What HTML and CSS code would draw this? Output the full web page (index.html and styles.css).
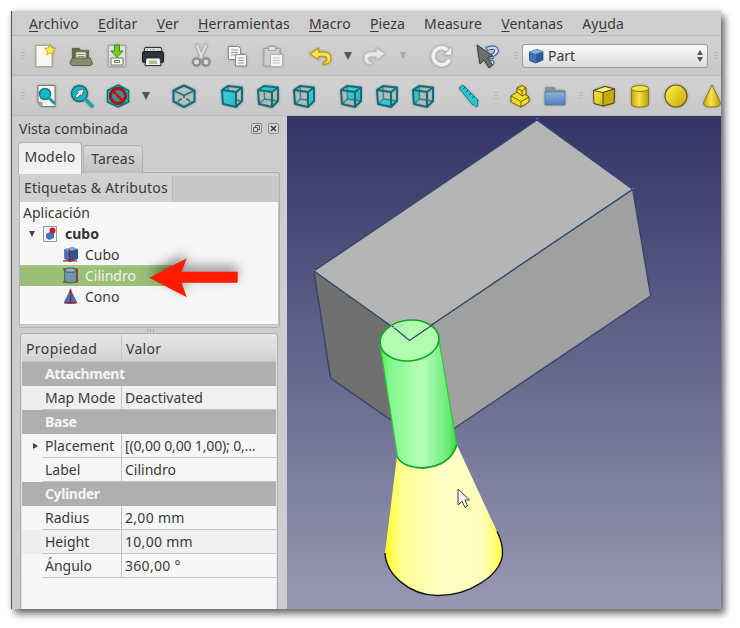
FILE: index.html
```html
<!DOCTYPE html>
<html lang="es">
<head>
<meta charset="utf-8">
<title>FreeCAD</title>
<link rel="stylesheet" href="styles.css">
</head>
<body>
<svg class="defs" aria-hidden="true">
  <defs>
    <linearGradient id="gTeal" x1="0" y1="0" x2="1" y2="1"><stop offset="0" stop-color="#14e0e6"/><stop offset="1" stop-color="#12aab4"/></linearGradient>
    <linearGradient id="gYel" x1="0" y1="0" x2="1" y2="1"><stop offset="0" stop-color="#fff04a"/><stop offset="1" stop-color="#c9a800"/></linearGradient>
    <linearGradient id="gYelH" x1="0" y1="0" x2="1" y2="0"><stop offset="0" stop-color="#c9a60c"/><stop offset=".45" stop-color="#f7e34a"/><stop offset="1" stop-color="#b99a08"/></linearGradient>
    <linearGradient id="gBlue" x1="0" y1="0" x2="0" y2="1"><stop offset="0" stop-color="#8fb4e0"/><stop offset="1" stop-color="#4f7fbf"/></linearGradient>
    <linearGradient id="gCylHi" x1="0" y1="0" x2="1" y2="0"><stop offset="0" stop-color="#46ef52"/><stop offset=".12" stop-color="#80f88a"/><stop offset=".55" stop-color="#b8feba"/><stop offset=".9" stop-color="#66ea70"/><stop offset="1" stop-color="#38d846"/></linearGradient>
    <linearGradient id="gCone" x1="0" y1="0" x2="1" y2="0"><stop offset="0" stop-color="#ffff20"/><stop offset=".14" stop-color="#ffff90"/><stop offset=".5" stop-color="#ffffc8"/><stop offset=".84" stop-color="#ffffb8"/><stop offset="1" stop-color="#ffff40"/></linearGradient>
    <symbol id="wire" viewBox="0 0 24 24">
      <path d="M8 2 22 3.500 22 17 16 23 3 20 2 6Z" fill="#9cc4c6" fill-opacity=".25"/>
      <path d="M2 6 8 2 22 3.500 16 8 2 6ZM2 6 3 20 16 23 16 8M16 23 22 17 22 3.500" fill="none" stroke="#0f6f78" stroke-width="2" stroke-linejoin="round"/>
    </symbol>
    <symbol id="wireBack" viewBox="0 0 24 24">
      <path d="M8 2 8.500 15 3 20M8.500 15 22 17" fill="none" stroke="#0f6f78" stroke-width="1.300"/>
    </symbol>
  </defs>
</svg>

<div class="window">
  <nav class="menubar">
    <span class="menu"><u>A</u>rchivo</span>
    <span class="menu"><u>E</u>ditar</span>
    <span class="menu"><u>V</u>er</span>
    <span class="menu"><u>H</u>erramientas</span>
    <span class="menu"><u>M</u>acro</span>
    <span class="menu"><u>P</u>ieza</span>
    <span class="menu">Measure</span>
    <span class="menu"><u>V</u>entanas</span>
    <span class="menu">Ay<u>u</u>da</span>
  </nav>

  <div class="toolbar">
    <span class="handle h-first"></span>
    <span class="tool"><svg viewBox="0 0 24 24"><path d="M3 1.500H15L19 6V22.500H3Z" fill="#fbf8ee" stroke="#a8a8a0"/><path d="m17 0.500 1.700 3.400 3.800.5-2.800 2.600.7 3.700-3.400-1.800-3.300 1.800.6-3.700-2.700-2.600 3.800-.5Z" fill="#fce94f" stroke="#c4a000" stroke-width=".8"/></svg></span>
    <span class="tool"><svg viewBox="0 0 24 24"><path d="M3 4H10L12 6H20V19H3Z" fill="#5f6b4b"/><path d="M7 8H17V15H7Z" fill="#e6e6dc" stroke="#8a8a80" stroke-width=".8"/><path d="M8.500 10.500H15.500M8.500 12.500H15.500" stroke="#8a8a80"/><path d="M3.500 14H21L23.500 20 21 21.500H3L1 19Z" fill="#838f6c" stroke="#58634a"/></svg></span>
    <span class="tool"><svg viewBox="0 0 24 24"><path d="M3.500 1.500H20.500V22.500H3.500Z" fill="#dedfd9" stroke="#a4a6a0"/><path d="M6 14H18V21H6Z" fill="#f6f6f0" stroke="#77786f"/><path d="M9.500 16.500H14.500V18.500H9.500Z" fill="#fff" stroke="#555" stroke-width=".8"/><path d="M9.500 1H14.500V7H18L12 13.500 6 7H9.500Z" fill="#72cc2a" stroke="#3f8e10"/></svg></span>
    <span class="tool"><svg viewBox="0 0 24 24"><path d="M4 3.500H20L21 8H3Z" fill="#d8d8d4" stroke="#2e2e2e"/><path d="M1.500 9.500Q1.500 7.500 3.500 7.500H20.500Q22.500 7.500 22.500 9.500V17Q22.500 18.500 20.500 18.500H3.500Q1.500 18.500 1.500 17Z" fill="#30343a" stroke="#1a1a1a"/><path d="M5 14H19L20 21.500H4Z" fill="#f2f2ee" stroke="#333"/><path d="M8 16.500H16V20H8Z" fill="#9cc98a"/><path d="M6 5.500H7M9 5.500H10M12 5.500H13" stroke="#777"/></svg></span>
    <span class="sep s12"></span>
    <span class="tool"><svg viewBox="0 0 24 24"><path d="M8 1 12.700 13.500M17 1 11.300 13.500" stroke="#bdbdbd" stroke-width="3.200" stroke-linecap="round" fill="none"/><path d="M8 1 12.700 13.500M17 1 11.300 13.500" stroke="#ededed" stroke-width="1.200" fill="none"/><circle cx="7.500" cy="18" r="3.500" fill="#dcdcdc" stroke="#8b8b8b" stroke-width="2"/><circle cx="17" cy="18" r="3.500" fill="#dcdcdc" stroke="#8b8b8b" stroke-width="2"/></svg></span>
    <span class="tool"><svg viewBox="0 0 24 24"><path d="M3.500 2.500H13.500L15.500 4.500V15.500H3.500Z" fill="#f4f4f2" stroke="#8c8c8a"/><path d="M6 6H13M6 8.500H13M6 11H13" stroke="#9c9c9a"/><path d="M10.500 10.500H20.500L21.500 11.500V22H10.500Z" fill="#f4f4f2" stroke="#8c8c8a"/><path d="M13 14H19M13 16.500H19M13 19H19" stroke="#9c9c9a"/></svg></span>
    <span class="tool"><svg viewBox="0 0 24 24"><path d="M3 4.500H19V22H3Z" fill="#cfcfca" stroke="#a2a2a0"/><path d="M7.500 2.500H14.500V6.500H7.500Z" fill="#e2e2de" stroke="#a2a2a0"/><path d="M9.500 10.500H21.500V22.500H9.500Z" fill="#f5f5f2" stroke="#b0b0ae"/><path d="M12 14H19M12 16.500H19M12 19H19" stroke="#c2c2c0"/></svg></span>
    <span class="sep s11"></span>
    <span class="tool"><svg viewBox="0 0 24 24"><path d="M10.500 4 2 10 10.500 15.500V12.500H16Q19 12.500 19 15 19 17.500 15.500 18.500L14.500 20.500Q23 20.500 23 14.500 23 8 16 8H10.500Z" fill="#f9e26a" stroke="#c4a000" stroke-width="1.300" stroke-linejoin="round"/></svg></span>
    <span class="drop"><i class="tri"></i></span>
    <span class="tool"><svg viewBox="0 0 24 24"><path d="M13.500 4 22 10 13.500 15.500V12.500H8Q5 12.500 5 15 5 17.500 8.500 18.500L9.500 20.500Q1 20.500 1 14.500 1 8 8 8H13.500Z" fill="#e8e8e6" stroke="#c6c6c4" stroke-linejoin="round"/></svg></span>
    <span class="drop"><i class="tri tri-off"></i></span>
    <span class="sep s12"></span>
    <span class="tool"><svg viewBox="0 0 24 24"><path d="M19.500 15.500A8.500 8.500 0 1 1 17.500 6" fill="none" stroke="#bdbdbb" stroke-width="5"/><path d="M19.500 15.500A8.500 8.500 0 1 1 17.500 6" fill="none" stroke="#f0f0ee" stroke-width="3.400"/><path d="M21.500 3V11H13.500Z" fill="#f0f0ee" stroke="#bdbdbb"/></svg></span>
    <span class="sep s10"></span>
    <span class="tool"><svg viewBox="0 0 24 24"><text x="10" y="21" class="help-mark">?</text><path d="M1 1 17 12 11.500 13.500 16.500 21 13 24 8 16 4 20Z" fill="#6e6e6c" stroke="#3a3a3a" stroke-linejoin="round"/></svg></span>
    <span class="handle h-mid"></span>
    <div class="combo">
      <svg class="combo-icon" viewBox="0 0 16 16"><path d="M1.500 4 9 1.500 15 3.500 15 12 7.500 15 1.500 12.500Z" fill="#3f72b8" stroke="#24487c" stroke-width=".8"/><path d="M1.500 4 9 1.500 15 3.500 8 6Z" fill="#8ab0e2"/><path d="M8 6 15 3.500V12L8 15Z" fill="#2c5a9a"/></svg>
      <span class="combo-text">Part</span>
      <span class="spin"><i class="up"></i><i class="down"></i></span>
    </div>
    <span class="handle h-end"></span>
  </div>

  <div class="toolbar toolbar-2">
    <span class="handle h-first2"></span>
    <span class="tool"><svg viewBox="0 0 24 24"><path d="M4 1.500H21V22.500H8L4 18.500Z" fill="#f6f6f0" stroke="#77786f"/><path d="M4 18.500H8V22.500Z" fill="#bcbcb4" stroke="#77786f" stroke-width=".7"/><circle cx="11" cy="10" r="5.500" fill="#1ab8c2" stroke="#0f7a84" stroke-width="1.500"/><path d="M15 14 20 19" stroke="#0f9aa6" stroke-width="3" stroke-linecap="round"/></svg></span>
    <span class="tool"><svg viewBox="0 0 24 24"><circle cx="9.500" cy="9.500" r="8" fill="#1ab0ba" stroke="#0f7079" stroke-width="1.500"/><path d="M15.500 15.500 22 22" stroke="#13a4ae" stroke-width="3.600" stroke-linecap="round"/><path d="M14 5 7 7 8.500 8.500 5 12 7 14 10.500 10.500 12 12Z" fill="#eef2f2" stroke="#3c5e60" stroke-width=".7"/></svg></span>
    <span class="tool"><svg viewBox="0 0 24 24"><path d="M12 1 22.500 6.500V18L12 23 1.500 18V6.500Z" fill="#1ac0ca" stroke="#0f6f78" stroke-width="1.500"/><circle cx="12" cy="12" r="7.300" fill="#3c8c96" stroke="#d40000" stroke-width="2.400"/><path d="M7 7 17 17" stroke="#d40000" stroke-width="2.400"/><circle cx="12" cy="12" r="8.700" fill="none" stroke="#222" stroke-width=".7"/></svg></span>
    <span class="drop"><i class="tri"></i></span>
    <span class="sep s11"></span>
    <span class="tool"><svg viewBox="0 0 24 24"><path d="M12 1.500 22.500 6.500V17.500L12 23 1.500 17.500V6.500Z" fill="#b8cccd" fill-opacity=".35" stroke="#0f6f78" stroke-width="2" stroke-linejoin="round"/><path d="M1.500 6.500 12 11.500 22.500 6.500M12 11.500V14M12 1.500 5 5M12 1.500 19 5" fill="none" stroke="#0f6f78" stroke-width="1.400"/><path d="M6 18Q7 15 10 15M18 18Q17 15 14 15" fill="none" stroke="#0f6f78" stroke-width="1.200"/></svg></span>
    <span class="sep s12"></span>
    <span class="tool"><svg viewBox="0 0 24 24"><use href="#wireBack"/><path d="M2 6 16 8.500 15.500 23 3 20Z" fill="url(#gTeal)"/><use href="#wire"/></svg></span>
    <span class="tool"><svg viewBox="0 0 24 24"><use href="#wireBack"/><path d="M2 6 8 2 22 3.500 16 8Z" fill="url(#gTeal)"/><use href="#wire"/></svg></span>
    <span class="tool"><svg viewBox="0 0 24 24"><use href="#wireBack"/><path d="M16 8 22 3.500 22 17 16 23Z" fill="url(#gTeal)"/><use href="#wire"/></svg></span>
    <span class="sep s11"></span>
    <span class="tool"><svg viewBox="0 0 24 24"><path d="M8 2 22 3.500 22 17 8.500 15Z" fill="url(#gTeal)"/><use href="#wireBack"/><use href="#wire"/></svg></span>
    <span class="tool"><svg viewBox="0 0 24 24"><path d="M3 20 8.500 15 22 17 16 23Z" fill="url(#gTeal)"/><use href="#wireBack"/><use href="#wire"/></svg></span>
    <span class="tool"><svg viewBox="0 0 24 24"><path d="M2 6 8 2 8.500 15 3 20Z" fill="url(#gTeal)"/><use href="#wireBack"/><use href="#wire"/></svg></span>
    <span class="sep s9"></span>
    <span class="tool"><svg viewBox="0 0 24 24"><path d="M3 4 7 1 22 16 21 23 16 20Z" fill="#2fc6d0" stroke="#0f7f88"/><path d="M7 5 9 3.500M10 8 12 6.500M13 11 15 9.500M16 14 18 12.500" stroke="#0f7f88" stroke-width="1.200"/></svg></span>
    <span class="handle h-mid2"></span>
    <span class="tool"><svg viewBox="0 0 24 24"><path d="M4 12 10 8V4L15 1.500 19 4V11L22 13V18L14 23 4 18Z" fill="#f2dc28" stroke="#6e6000" stroke-linejoin="round"/><path d="M4 12 14 17.500V23M14 17.500 22 13M10 4 15 7 19 4M15 7V12M10 8 15 12 19 10" fill="none" stroke="#6e6000"/></svg></span>
    <span class="tool"><svg viewBox="0 0 24 24"><path d="M2 3H11L13 6H22V21H2Z" fill="#8a8f98"/><path d="M2 8H22V21H2Z" fill="url(#gBlue)" stroke="#56779f" stroke-width=".8"/></svg></span>
    <span class="handle h-mid3"></span>
    <span class="tool"><svg viewBox="0 0 24 24"><path d="M1.500 6.500 13 2.500 22.500 5 22 19 11 22 2 19.500Z" fill="url(#gYel)" stroke="#4e4a1a" stroke-linejoin="round"/><path d="M1.500 6.500 13 2.500 22.500 5 11 8.500Z" fill="#fff36a" stroke="#4e4a1a" stroke-linejoin="round"/><path d="M11 8.500 22.500 5 22 19 11 22Z" fill="#c7aa12" stroke="#4e4a1a" stroke-linejoin="round"/></svg></span>
    <span class="tool"><svg viewBox="0 0 24 24"><path d="M3.500 5V20Q3.500 23 12 23T20.500 20V5Z" fill="url(#gYelH)" stroke="#85771a"/><ellipse cx="12" cy="4.500" rx="8.500" ry="3" fill="#f8e540" stroke="#85771a"/></svg></span>
    <span class="tool"><svg viewBox="0 0 24 24"><circle cx="12" cy="12" r="11" fill="url(#gYel)" stroke="#6e6230" stroke-width="1.200"/></svg></span>
    <span class="tool"><svg viewBox="0 0 24 24"><path d="M12 1 20.500 19Q20.500 23 12 23T3.500 19Z" fill="url(#gYelH)" stroke="#85771a" stroke-linejoin="round"/></svg></span>
  </div>

  <div class="workspace">
    <aside class="dock">
      <div class="dock-title">
        <span class="dock-name">Vista combinada</span>
        <svg class="dock-btn" viewBox="0 0 11 11"><rect x=".5" y=".5" width="10" height="10" rx="1.500" class="btn-frame"/><path d="M2.500 4.500H6.500V8.500H2.500ZM4.500 4.500V2.500H8.500V6.500H6.500" class="btn-line"/></svg>
        <svg class="dock-btn dock-btn-x" viewBox="0 0 11 11"><rect x=".5" y=".5" width="10" height="10" rx="1.500" class="btn-frame"/><path d="M3 3 8 8M8 3 3 8" class="btn-x"/></svg>
      </div>
      <div class="tabs">
        <span class="tab tab-on">Modelo</span>
        <span class="tab">Tareas</span>
      </div>
      <section class="pane">
        <div class="tree-head"><span class="tree-head-cell">Etiquetas &amp; Atributos</span></div>
        <div class="tree">
          <div class="tree-row tree-app">Aplicación</div>
          <div class="tree-row tree-doc">
            <i class="tree-arrow"></i>
            <svg class="doc-icon" viewBox="0 0 16 16"><rect x=".5" y=".5" width="13" height="15" fill="#f5f5f5" stroke="#9a9a9a"/><path d="M3 8 8 5.500 11 7V12L6.500 14 3 12Z" fill="#3f72b8"/><circle cx="9.500" cy="4.500" r="3" fill="#cc1a1a"/></svg>
            <b>cubo</b>
          </div>
          <div class="tree-row tree-child">
            <svg class="item-icon" viewBox="0 0 16 16"><path d="M2 3 10 1 15 3V12L7 15 2 12Z" fill="#3f72b8"/><path d="M2 3 10 1 15 3 7 5Z" fill="#7ea6dc"/><path d="M7 5 15 3V12L7 15Z" fill="#2c558f"/><path d="M7 3V14M1 14H14" stroke="#b01818" stroke-width="1.300"/></svg>
            Cubo
          </div>
          <div class="tree-row tree-child tree-selected">
            <svg class="item-icon" viewBox="0 0 16 16"><path d="M2.500 3V13Q2.500 15 8 15T13.500 13V3Z" fill="#6a9aa8" stroke="#44606e"/><ellipse cx="8" cy="3" rx="5.500" ry="2" fill="#8cb0ba" stroke="#44606e"/><path d="M1 2H4M12 2H15M1 14H4M12 14H15M14.500 2V14" stroke="#a83020"/></svg>
            Cilindro
          </div>
          <div class="tree-row tree-child">
            <svg class="item-icon" viewBox="0 0 16 16"><path d="M8 1 14 13Q14 15 8 15T2 13Z" fill="#3f72b8"/><path d="M8 1V14M2 14H14" stroke="#b01818" stroke-width="1.300"/></svg>
            Cono
          </div>
        </div>
      </section>
      <div class="splitter"><i></i></div>
      <section class="props">
        <div class="prop-list">
          <div class="prop-head"><span class="ph-name">Propiedad</span><span class="ph-val">Valor</span></div>
          <div class="group">Attachment</div>
          <div class="prop"><span class="pn">Map Mode</span><span class="pv">Deactivated</span></div>
          <div class="group">Base</div>
          <div class="prop prop-exp"><i class="exp"></i><span class="pn">Placement</span><span class="pv pv-long">[(0,00 0,00 1,00); 0,...</span></div>
          <div class="prop prop-plain"><span class="pn">Label</span><span class="pv">Cilindro</span></div>
          <div class="group">Cylinder</div>
          <div class="prop prop-plain"><span class="pn">Radius</span><span class="pv pv-num">2,00 mm</span></div>
          <div class="prop"><span class="pn">Height</span><span class="pv pv-num">10,00 mm</span></div>
          <div class="prop prop-plain"><span class="pn">Ángulo</span><span class="pv pv-num">360,00 °</span></div>
        </div>
      </section>
    </aside>
    <main class="view">
      <svg class="scene" viewBox="287 116 434 493">
        <polygon points="537,120 632.700,189.300 410,339.500 314,271" fill="#b5b5b5"/>
        <polygon points="632.700,189.300 650.700,296 428,446 410,339.500" fill="#a0a0a0"/>
        <polygon points="314,271 410,339.500 428,446 330.500,378" fill="#707070"/>
        <path d="M537 120 632.700 189.300 650.700 296 428 446 330.500 378 314 271ZM314 271 410 339.500 632.700 189.300" fill="none" stroke="#2c4a68" stroke-width="1.400"/>
        <path d="M536 118h2v1h-2ZM632 188h2v1h-2ZM313 270h2v1h-2ZM651 296h1v1h-1ZM330 378h1v1h-1ZM408 340h2v2h-2Z" fill="#a040ff"/>
        <path d="M385 553C386 575 410 595 437 595.500 470 596 500 575 502.500 555 503 545 500 537 497 531.500L456.500 444 397 456Z" fill="url(#gCone)"/>
        <path d="M385 553C386 575 410 595 437 595.500 470 596 500 575 502.500 555 503 545 500 537 497 531.500" fill="none" stroke="#1a1a1a" stroke-width="1.500"/>
        <path d="M380 344 397.500 457Q402 467 423 468 450 466 456.700 445L439 340Z" fill="url(#gCylHi)"/>
        <path d="M380 344 397.500 457M456.700 445 439 340" fill="none" stroke="#2ec63a" stroke-width="1.200"/>
        <path d="M397.500 457Q402 467 423 468 450 466 456.700 445" fill="none" stroke="#18a424" stroke-width="1.800"/>
        <ellipse cx="409.500" cy="340.500" rx="29.500" ry="20.300" transform="rotate(-6 409.500 340.500)" fill="#b0fdb2" stroke="#14a820" stroke-width="1.600"/>
        <path d="M392 326 409.500 340.500 433 324.500" fill="none" stroke="#2c4a68" stroke-width="1.200"/>
        <path d="M393 328 403 325M405 333 407 338" fill="none" stroke="#b8b8b8"/>
        <path d="M458 489V505L462 501 465 507.500 467.500 506 465 500H469.500Z" fill="#f4f4f4" stroke="#2a2a2a" stroke-width=".9"/>
      </svg>
    </main>
  </div>
</div>

<svg class="callout" viewBox="0 0 100 50" aria-hidden="true"><path d="M1.300 23.700 38.700 4.300 33.700 17.700H89.700V28.700H33.700L38.700 43.300Z" class="callout-arrow"/></svg>
</body>
</html>
```

FILE: styles.css
```css
* { box-sizing: border-box; }
html, body { margin: 0; padding: 0; width: 740px; height: 628px; overflow: hidden; background: #fff; }
body { font-family: "Noto Sans", sans-serif; font-size: 14px; color: #3a3a3a; position: relative; }
.defs { position: absolute; width: 0; height: 0; }

.window {
  margin: 11px 0 0 11px;
  width: 710px;
  height: 598px;
  display: flex;
  flex-direction: column;
  background: #cdcdcd;
  border-left: 1px solid #55555a;
  box-shadow: 4px 5px 7px rgba(0,0,0,.55), 0 0 5px rgba(0,0,0,.18);
  overflow: hidden;
}

.menubar { height: 25px; display: flex; align-items: center; background: #cecece; border-bottom: 1px solid #bcbcbc; padding-left: 17px; gap: 19.200px; flex: none; }
.menu { line-height: 25px; letter-spacing: .12px; }
.menu u { text-underline-offset: 2px; }

.toolbar { height: 40px; flex: none; display: flex; align-items: center; background: linear-gradient(#d2d2d2, #c8c8c8); border-bottom: 1px solid #bcbcbc; }
.tool { width: 36px; height: 36px; flex: none; display: flex; align-items: center; justify-content: center; }
.tool svg { width: 24px; height: 24px; overflow: visible; filter: drop-shadow(0 0 1px rgba(0,0,0,.28)); }
.drop { width: 19px; height: 36px; flex: none; display: flex; align-items: center; justify-content: center; }
.tri { width: 0; height: 0; border-left: 4px solid transparent; border-right: 4px solid transparent; border-top: 8px solid #555; }
.tri-off { border-top-color: #a8a8a8; border-left-width: 3px; border-right-width: 3px; border-top-width: 7px; }
.sep { flex: none; height: 1px; }
.s9 { width: 9px; } .s10 { width: 10px; } .s11 { width: 11px; } .s12 { width: 12px; }
.handle { flex: none; width: 4px; height: 8px; background: repeating-linear-gradient(#b8b8b8 0 1px, transparent 1px 3px); }
.h-first { margin-left: 9px; margin-right: 2px; }
.h-first2 { margin-left: 9px; margin-right: 3px; }
.h-mid { margin-left: 8px; margin-right: 4px; }
.h-end { margin-left: 6px; }
.h-mid2 { margin-left: 8px; margin-right: 3px; }
.h-mid3 { margin-left: 6px; margin-right: 3px; }

.combo { width: 186px; height: 24px; flex: none; display: flex; align-items: center; border: 1px solid #9c9c9c; border-radius: 3px; background: linear-gradient(#fafafa, #dcdcdc); padding-left: 5px; }
.combo-icon { width: 16px; height: 16px; margin-right: 4px; }
.combo-text { flex: 1; }
.spin { width: 14px; display: flex; flex-direction: column; gap: 2px; align-items: center; }
.spin i { width: 0; height: 0; border-left: 3px solid transparent; border-right: 3px solid transparent; }
.spin .up { border-bottom: 5px solid #555; }
.spin .down { border-top: 5px solid #555; }

.workspace { flex: 1; min-height: 0; display: flex; }
.dock { width: 275px; flex: none; display: flex; flex-direction: column; background: #cdcdcd; padding-left: 7px; }
.dock-title { height: 26px; flex: none; display: flex; align-items: center; padding-bottom: 2px; }
.dock-name { flex: 1; }
.dock-btn { width: 11px; height: 11px; margin-right: 6px; }
.dock-btn-x { margin-right: 8px; }
.btn-frame { fill: #d8d8d8; stroke: #8a8a8a; }
.btn-line { fill: none; stroke: #555; stroke-width: .9; }
.btn-x { fill: none; stroke: #444; stroke-width: 1.700; }

.tabs { height: 31px; flex: none; display: flex; align-items: flex-end; gap: 1px; margin-left: -1px; position: relative; z-index: 1; }
.tab { height: 28px; width: 60px; padding-top: 3px; text-align: center; background: linear-gradient(#d8d8d8, #c2c2c2); border: 1px solid #b0b0b0; border-bottom: 0; border-radius: 4px 4px 0 0; letter-spacing: .2px; }
.tab-on { height: 32px; width: 64px; margin-bottom: -1px; padding-top: 4px; background: linear-gradient(#ececec, #f4f4f4); color: #3a3a3a; }

.pane { width: 261px; height: 156px; flex: none; border: 1px solid #b0b0b0; border-radius: 2px; padding: 3px 0 2px 0; background: #d2d2d2; display: flex; flex-direction: column; margin-top: -1px; }
.tree-head { height: 26px; flex: none; background: #c8c8c8; }
.tree-head-cell { display: block; width: 153px; height: 26px; line-height: 24px; padding-left: 4px; background: #d0d0d0; border-right: 1px solid #bcbcbc; letter-spacing: .2px; }
.tree { flex: 1; background: #f7f7f7; border-right: 1px solid #c0c0c0; border-bottom: 1px solid #c0c0c0; }
.tree-row { height: 21px; line-height: 20px; display: flex; align-items: center; white-space: nowrap; }
.tree-app { padding-left: 3px; }
.tree-doc { padding-left: 9px; }
.tree-doc b { font-weight: 700; color: #333; }
.tree-arrow { width: 0; height: 0; border-left: 3.500px solid transparent; border-right: 3.500px solid transparent; border-top: 6px solid #444; margin-right: 8px; }
.doc-icon { width: 16px; height: 16px; margin-right: 6px; }
.tree-child { padding-left: 42px; gap: 6px; }
.item-icon { width: 17px; height: 17px; flex: none; }
.tree-selected { width: 153px; background: linear-gradient(#a9c986 0, #9abf76 3px, #9abf76 100%); color: #f2f2f2; }

.splitter { height: 5px; flex: none; display: flex; justify-content: center; align-items: center; width: 262px; }
.splitter i { width: 7px; height: 3px; background: repeating-linear-gradient(90deg, #a8a8a8 0 1px, transparent 1px 3px); }

.props { width: 258px; flex: 1; min-height: 0; margin-left: 1px; border: 1px solid #b0b0b0; border-bottom: 0; border-radius: 3px 3px 0 0; background: #e2e2e2; padding: 1px 1px 0; }
.prop-list { height: 100%; background: #f6f6f6; box-shadow: 0 0 0 0 transparent; border-left: 0; }
.prop-head { height: 27px; display: flex; line-height: 27px; background: linear-gradient(#e6e6e6, #d2d2d2); border-bottom: 1px solid #c4c4c4; }
.ph-name { width: 100px; padding-left: 4px; border-right: 1px solid #c4c4c4; letter-spacing: .4px; }
.ph-val { padding-left: 4px; letter-spacing: .3px; }
.group { height: 24px; line-height: 24px; padding-left: 23px; background: #afafaf; color: #f4f4f4; font-weight: 700; letter-spacing: -.4px; }
.prop { height: 24px; display: flex; line-height: 23px; padding-left: 20px; background: linear-gradient(90deg, #eeeeee 20px, #f0f0f0 20px); position: relative; white-space: nowrap; }
.prop-plain { background: #f7f7f7; }
.prop-exp { background: #f7f7f7; }
.pn { width: 80px; padding-left: 3px; border-right: 1px solid #c4c4c4; border-bottom: 1px solid #c4c4c4; flex: none; }
.pv { flex: 1; padding-left: 3px; border-bottom: 1px solid #c4c4c4; overflow: hidden; }
.pv-num { letter-spacing: .3px; }
.pv-long { letter-spacing: -.15px; }
.exp { position: absolute; left: 11px; top: 9px; width: 0; height: 0; border-top: 3px solid transparent; border-bottom: 3px solid transparent; border-left: 5px solid #444; }
.help-mark { font: 700 27px "Noto Sans", sans-serif; fill: #c8d8ea; stroke: #2a5c9a; stroke-width: .9px; }

.view { flex: 1; min-width: 0; background: linear-gradient(#333366, #9999b3); }
.scene { display: block; width: 434px; height: 493px; overflow: hidden; }

.callout { position: absolute; left: 148px; top: 254px; width: 100px; height: 50px; overflow: visible; filter: drop-shadow(0 -5px 6px rgba(0,0,0,.45)); }
.callout-arrow { fill: #ff1a00; }
```
